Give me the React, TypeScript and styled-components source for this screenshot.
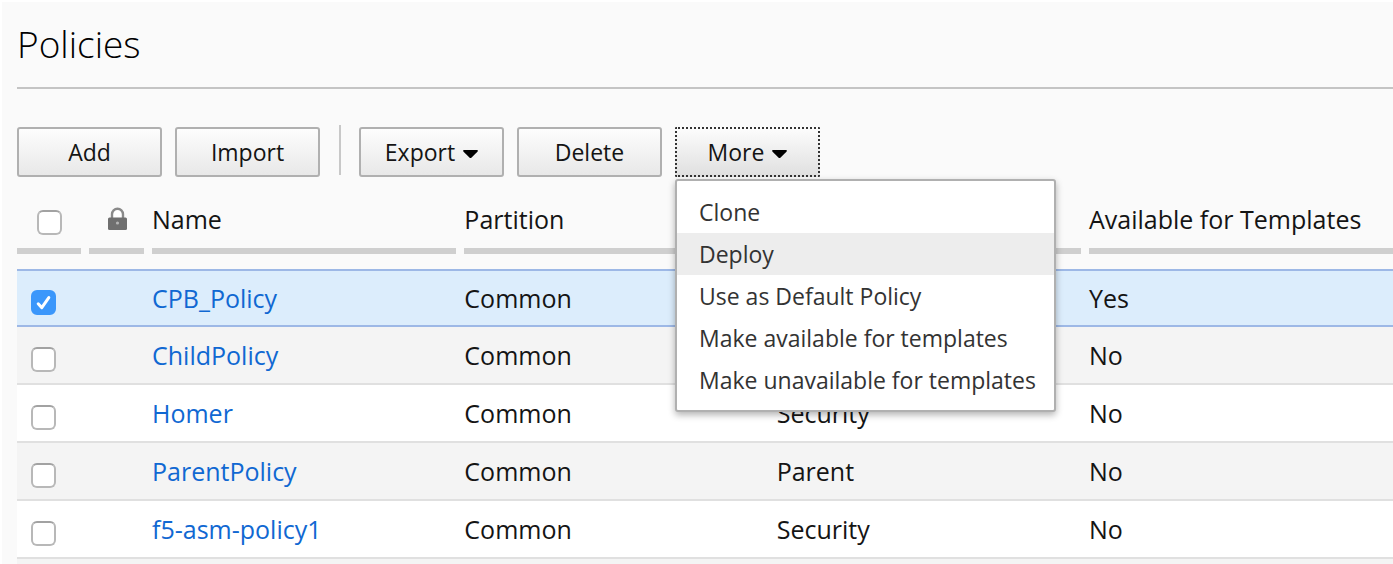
import React, { useState } from "react";
import styled, { createGlobalStyle, css } from "styled-components";

const GlobalStyle = createGlobalStyle`
  *, *::before, *::after { box-sizing: border-box; }
  body {
    margin: 0;
    background: #fff;
    color: #141414;
    font-family: "Open Sans", "Noto Sans", sans-serif;
  }
  button, input { font: inherit; color: inherit; margin: 0; }
`;

const Page = styled.main`
  display: flex;
  flex-direction: column;
  min-height: 100vh;
  padding: 0 0 0 15px;
  background: #fafafa;
  border: solid #fff;
  border-width: 2px 0 0 2px;
`;

const Title = styled.h1`
  margin: 0 0 38px;
  height: 87px;
  padding-top: 16px;
  border-bottom: 2px solid #c4c4c4;
  color: #000;
  font-size: 37px;
  line-height: 52px;
  font-weight: 300;
`;

const Toolbar = styled.div`
  display: flex;
  align-items: flex-start;
  gap: 13px;
`;

const ToolButton = styled.button<{ $active?: boolean }>`
  display: flex;
  align-items: center;
  justify-content: center;
  gap: 8px;
  width: 145px;
  height: 50px;
  padding: 0;
  border: 2px solid #b0b0b0;
  border-radius: 3px;
  background: linear-gradient(#fdfdfd, #e8e8e8);
  font-size: 23px;
  line-height: 32px;
  > svg { margin-top: 4px; }
  ${(p) =>
    p.$active &&
    css`
      border: 2px dotted #333;
      border-radius: 1px;
      background: linear-gradient(#fdfdfd, #dfdfdf) border-box;
    `}
`;

const Separator = styled.span`
  width: 2px;
  height: 50px;
  margin: -2px 5px 0 6px;
  background: #c8c8c8;
`;

const MenuAnchor = styled.div`
  position: relative;
`;

const Menu = styled.div`
  position: absolute;
  z-index: 1;
  top: 52px;
  left: 0;
  width: 381px;
  padding: 10px 0 9px;
  border: 2px solid #b0b0b0;
  border-radius: 3px;
  background: #fff;
  box-shadow: 0 3px 7px rgba(0, 0, 0, 0.3);
`;

const MenuItem = styled.button`
  display: block;
  width: 100%;
  height: 42px;
  padding: 0 22px;
  border: 0;
  background: none;
  color: #333;
  font-size: 23px;
  line-height: 42px;
  text-align: left;
  white-space: nowrap;
  &[data-highlighted="true"] { background: #ededed; }
`;

const Table = styled.table`
  width: 100%;
  table-layout: fixed;
  border-collapse: separate;
  border-spacing: 0;
  font-size: 25px;
  line-height: 34px;
`;

const SelectCol = styled.col` width: 72px; `;
const LockCol = styled.col` width: 63px; `;
const TextCol = styled.col` width: 22.7%; `;

const HeadCell = styled.th`
  padding: 0 0 15px;
  font-weight: 400;
  text-align: left;
`;

const HeadLabel = styled.div<{ $indent?: number; $top?: number; $last?: boolean }>`
  display: flex;
  align-items: center;
  height: 77px;
  margin-right: ${(p) => (p.$last ? 0 : 8)}px;
  padding: ${(p) => p.$top ?? 13}px 0 0 ${(p) => p.$indent ?? 0}px;
  border-bottom: 6px solid #cfcfcf;
  white-space: nowrap;
`;

const Cell = styled.td`
  height: 58px;
  padding: 0;
  border-bottom: 2px solid #e0e0e0;
  white-space: nowrap;
`;

const SelectCell = styled(Cell)`
  padding: 3px 0 0 14px;
`;

const Row = styled.tr<{ $selected: boolean }>`
  background: #fff;
  &:nth-child(even) { background: #f4f4f4; }
  ${(p) =>
    p.$selected &&
    css`
      &, &:nth-child(even) { background: #dcedfc; }
      ${Cell} {
        border-top: 2px solid #9db8e6;
        border-bottom-color: #9db8e6;
      }
    `}
`;

const NameLink = styled.a`
  color: #1068d2;
  text-decoration: none;
`;

const NextRow = styled.div`
  flex: 1;
  background: #f4f4f4;
`;

const CheckWrap = styled.span`
  display: inline-grid;
  vertical-align: middle;
  > * { grid-area: 1 / 1; }
  > svg { pointer-events: none; }
`;

const CheckInput = styled.input`
  appearance: none;
  width: 25px;
  height: 25px;
  border: 2px solid #b8b8b8;
  border-top-color: #a2a2a2;
  border-radius: 6px;
  background: #fff;
  &:checked {
    border-color: #3b97fb;
    background: #3b97fb;
  }
`;

function Checkbox({ label, checked, onChange }: { label: string; checked: boolean; onChange: () => void }) {
  return (
    <CheckWrap>
      <CheckInput type="checkbox" aria-label={label} checked={checked} onChange={onChange} />
      {checked && (
        <svg width="25" height="25" viewBox="0 0 25 25" fill="none" aria-hidden="true">
          <path d="M7.2 13.8 10.8 17.6 17.8 7.6" stroke="#fff" strokeWidth="3" strokeLinecap="round" strokeLinejoin="round" />
        </svg>
      )}
    </CheckWrap>
  );
}

const Caret = () => (
  <svg width="15" height="10" viewBox="0 0 15 10" aria-hidden="true">
    <path d="M0.3 1h14.4v1.4L8.6 8.6q-1.1 1-2.2 0L0.3 2.4z" fill="#000" />
  </svg>
);

const LockIcon = () => (
  <svg width="20" height="24" viewBox="0 0 20 24" role="img" aria-label="Locked">
    <path d="M5 11V7.2a5.5 5.5 0 0 1 11 0V11" fill="#fff" stroke="#8a8a8a" strokeWidth="2.4" />
    <rect x="1" y="10.4" width="19" height="12.6" rx="1.5" fill="#6f6f6f" />
    <circle cx="10.5" cy="16" r="1.6" fill="#b4b4b4" />
  </svg>
);

const POLICIES = [
  { name: "CPB_Policy", partition: "Common", type: "Security", available: "Yes" },
  { name: "ChildPolicy", partition: "Common", type: "Security", available: "No" },
  { name: "Homer", partition: "Common", type: "Security", available: "No" },
  { name: "ParentPolicy", partition: "Common", type: "Parent", available: "No" },
  { name: "f5-asm-policy1", partition: "Common", type: "Security", available: "No" },
];

const ACTIONS = [
  "Clone",
  "Deploy",
  "Use as Default Policy",
  "Make available for templates",
  "Make unavailable for templates",
];

export default function App() {
  const [selected, setSelected] = useState<string[]>(["CPB_Policy"]);
  const [menuOpen, setMenuOpen] = useState(true);
  const [highlighted, setHighlighted] = useState("Deploy");

  const toggle = (name: string) =>
    setSelected((s) => (s.includes(name) ? s.filter((n) => n !== name) : [...s, name]));
  const allSelected = selected.length === POLICIES.length;

  return (
    <>
      <GlobalStyle />
      <Page>
        <Title>Policies</Title>
        <Toolbar>
          <ToolButton>Add</ToolButton>
          <ToolButton>Import</ToolButton>
          <Separator />
          <ToolButton>
            Export <Caret />
          </ToolButton>
          <ToolButton>Delete</ToolButton>
          <MenuAnchor>
            <ToolButton $active={menuOpen} aria-expanded={menuOpen} onClick={() => setMenuOpen(!menuOpen)}>
              More <Caret />
            </ToolButton>
            {menuOpen && (
              <Menu role="menu">
                {ACTIONS.map((a) => (
                  <MenuItem
                    key={a}
                    role="menuitem"
                    data-highlighted={a === highlighted}
                    onMouseEnter={() => setHighlighted(a)}
                  >
                    {a}
                  </MenuItem>
                ))}
              </Menu>
            )}
          </MenuAnchor>
        </Toolbar>
        <Table>
          <colgroup>
            <SelectCol />
            <LockCol />
            <TextCol />
            <TextCol />
            <TextCol />
            <col />
          </colgroup>
          <thead>
            <tr>
              <HeadCell>
                <HeadLabel $indent={20} $top={20}>
                  <Checkbox
                    label="Select all"
                    checked={allSelected}
                    onChange={() => setSelected(allSelected ? [] : POLICIES.map((p) => p.name))}
                  />
                </HeadLabel>
              </HeadCell>
              <HeadCell>
                <HeadLabel $indent={18}>
                  <LockIcon />
                </HeadLabel>
              </HeadCell>
              <HeadCell><HeadLabel>Name</HeadLabel></HeadCell>
              <HeadCell><HeadLabel>Partition</HeadLabel></HeadCell>
              <HeadCell><HeadLabel>Type</HeadLabel></HeadCell>
              <HeadCell><HeadLabel $last>Available for Templates</HeadLabel></HeadCell>
            </tr>
          </thead>
          <tbody>
            {POLICIES.map((p) => (
              <Row key={p.name} $selected={selected.includes(p.name)}>
                <SelectCell>
                  <Checkbox
                    label={`Select ${p.name}`}
                    checked={selected.includes(p.name)}
                    onChange={() => toggle(p.name)}
                  />
                </SelectCell>
                <Cell />
                <Cell><NameLink href="#">{p.name}</NameLink></Cell>
                <Cell>{p.partition}</Cell>
                <Cell>{p.type}</Cell>
                <Cell>{p.available}</Cell>
              </Row>
            ))}
          </tbody>
        </Table>
        <NextRow />
      </Page>
    </>
  );
}
